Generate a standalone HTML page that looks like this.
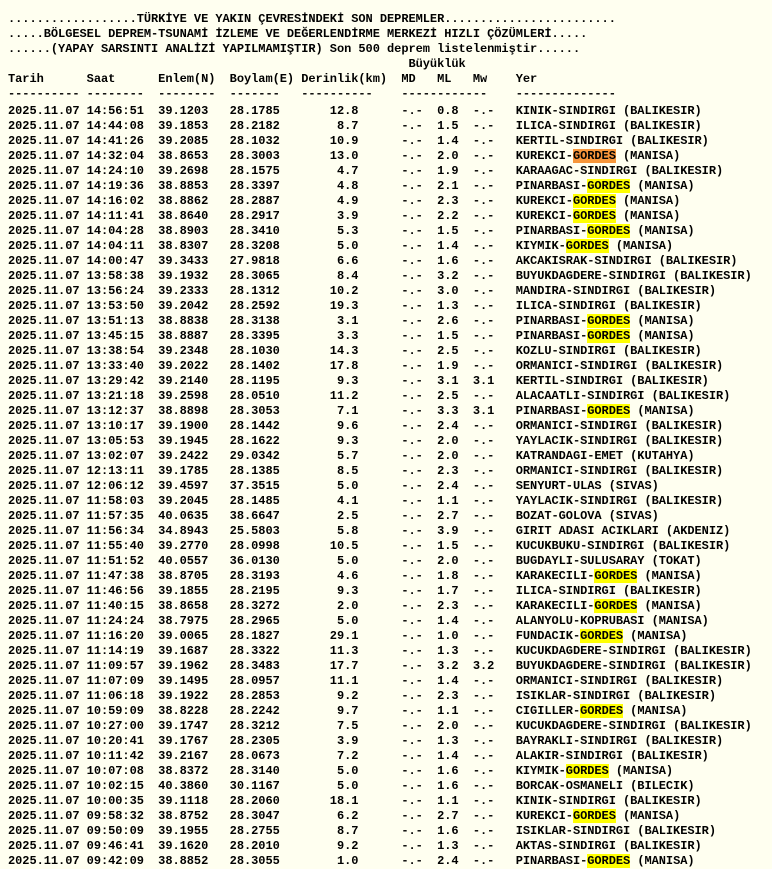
<!DOCTYPE html>
<html><head><meta charset="utf-8"><style>
html,body{margin:0;padding:0;background:#fffff0;width:772px;height:869px;overflow:hidden}
pre{margin:0;position:absolute;left:8px;top:12px;font-family:"Liberation Mono","DejaVu Sans Mono",monospace;font-size:12px;line-height:15px;letter-spacing:-0.05px;font-weight:bold;color:#000}
.y{background:#ffff00}.o{background:#f7963a}
.d{display:inline-block;height:17px;vertical-align:top}
</style></head><body><pre>..................TÜRKİYE VE YAKIN ÇEVRESİNDEKİ SON DEPREMLER........................
.....BÖLGESEL DEPREM-TSUNAMİ İZLEME VE DEĞERLENDİRME MERKEZİ HIZLI ÇÖZÜMLERİ.....
......(YAPAY SARSINTI ANALİZİ YAPILMAMIŞTIR) Son 500 deprem listelenmiştir......
                                                        Büyüklük
Tarih      Saat      Enlem(N)  Boylam(E) Derinlik(km)  MD   ML   Mw    Yer
<span class="d">---------- --------  --------  -------   ----------    ------------    --------------</span>
2025.11.07 14:56:51  39.1203   28.1785       12.8      -.-  0.8  -.-   KINIK-SINDIRGI (BALIKESIR)
2025.11.07 14:44:08  39.1853   28.2182        8.7      -.-  1.5  -.-   ILICA-SINDIRGI (BALIKESIR)
2025.11.07 14:41:26  39.2085   28.1032       10.9      -.-  1.4  -.-   KERTIL-SINDIRGI (BALIKESIR)
2025.11.07 14:32:04  38.8653   28.3003       13.0      -.-  2.0  -.-   KUREKCI-<span class="o">GORDES</span> (MANISA)
2025.11.07 14:24:10  39.2698   28.1575        4.7      -.-  1.9  -.-   KARAAGAC-SINDIRGI (BALIKESIR)
2025.11.07 14:19:36  38.8853   28.3397        4.8      -.-  2.1  -.-   PINARBASI-<span class="y">GORDES</span> (MANISA)
2025.11.07 14:16:02  38.8862   28.2887        4.9      -.-  2.3  -.-   KUREKCI-<span class="y">GORDES</span> (MANISA)
2025.11.07 14:11:41  38.8640   28.2917        3.9      -.-  2.2  -.-   KUREKCI-<span class="y">GORDES</span> (MANISA)
2025.11.07 14:04:28  38.8903   28.3410        5.3      -.-  1.5  -.-   PINARBASI-<span class="y">GORDES</span> (MANISA)
2025.11.07 14:04:11  38.8307   28.3208        5.0      -.-  1.4  -.-   KIYMIK-<span class="y">GORDES</span> (MANISA)
2025.11.07 14:00:47  39.3433   27.9818        6.6      -.-  1.6  -.-   AKCAKISRAK-SINDIRGI (BALIKESIR)
2025.11.07 13:58:38  39.1932   28.3065        8.4      -.-  3.2  -.-   BUYUKDAGDERE-SINDIRGI (BALIKESIR)
2025.11.07 13:56:24  39.2333   28.1312       10.2      -.-  3.0  -.-   MANDIRA-SINDIRGI (BALIKESIR)
2025.11.07 13:53:50  39.2042   28.2592       19.3      -.-  1.3  -.-   ILICA-SINDIRGI (BALIKESIR)
2025.11.07 13:51:13  38.8838   28.3138        3.1      -.-  2.6  -.-   PINARBASI-<span class="y">GORDES</span> (MANISA)
2025.11.07 13:45:15  38.8887   28.3395        3.3      -.-  1.5  -.-   PINARBASI-<span class="y">GORDES</span> (MANISA)
2025.11.07 13:38:54  39.2348   28.1030       14.3      -.-  2.5  -.-   KOZLU-SINDIRGI (BALIKESIR)
2025.11.07 13:33:40  39.2022   28.1402       17.8      -.-  1.9  -.-   ORMANICI-SINDIRGI (BALIKESIR)
2025.11.07 13:29:42  39.2140   28.1195        9.3      -.-  3.1  3.1   KERTIL-SINDIRGI (BALIKESIR)
2025.11.07 13:21:18  39.2598   28.0510       11.2      -.-  2.5  -.-   ALACAATLI-SINDIRGI (BALIKESIR)
2025.11.07 13:12:37  38.8898   28.3053        7.1      -.-  3.3  3.1   PINARBASI-<span class="y">GORDES</span> (MANISA)
2025.11.07 13:10:17  39.1900   28.1442        9.6      -.-  2.4  -.-   ORMANICI-SINDIRGI (BALIKESIR)
2025.11.07 13:05:53  39.1945   28.1622        9.3      -.-  2.0  -.-   YAYLACIK-SINDIRGI (BALIKESIR)
2025.11.07 13:02:07  39.2422   29.0342        5.7      -.-  2.0  -.-   KATRANDAGI-EMET (KUTAHYA)
2025.11.07 12:13:11  39.1785   28.1385        8.5      -.-  2.3  -.-   ORMANICI-SINDIRGI (BALIKESIR)
2025.11.07 12:06:12  39.4597   37.3515        5.0      -.-  2.4  -.-   SENYURT-ULAS (SIVAS)
2025.11.07 11:58:03  39.2045   28.1485        4.1      -.-  1.1  -.-   YAYLACIK-SINDIRGI (BALIKESIR)
2025.11.07 11:57:35  40.0635   38.6647        2.5      -.-  2.7  -.-   BOZAT-GOLOVA (SIVAS)
2025.11.07 11:56:34  34.8943   25.5803        5.8      -.-  3.9  -.-   GIRIT ADASI ACIKLARI (AKDENIZ)
2025.11.07 11:55:40  39.2770   28.0998       10.5      -.-  1.5  -.-   KUCUKBUKU-SINDIRGI (BALIKESIR)
2025.11.07 11:51:52  40.0557   36.0130        5.0      -.-  2.0  -.-   BUGDAYLI-SULUSARAY (TOKAT)
2025.11.07 11:47:38  38.8705   28.3193        4.6      -.-  1.8  -.-   KARAKECILI-<span class="y">GORDES</span> (MANISA)
2025.11.07 11:46:56  39.1855   28.2195        9.3      -.-  1.7  -.-   ILICA-SINDIRGI (BALIKESIR)
2025.11.07 11:40:15  38.8658   28.3272        2.0      -.-  2.3  -.-   KARAKECILI-<span class="y">GORDES</span> (MANISA)
2025.11.07 11:24:24  38.7975   28.2965        5.0      -.-  1.4  -.-   ALANYOLU-KOPRUBASI (MANISA)
2025.11.07 11:16:20  39.0065   28.1827       29.1      -.-  1.0  -.-   FUNDACIK-<span class="y">GORDES</span> (MANISA)
2025.11.07 11:14:19  39.1687   28.3322       11.3      -.-  1.3  -.-   KUCUKDAGDERE-SINDIRGI (BALIKESIR)
2025.11.07 11:09:57  39.1962   28.3483       17.7      -.-  3.2  3.2   BUYUKDAGDERE-SINDIRGI (BALIKESIR)
2025.11.07 11:07:09  39.1495   28.0957       11.1      -.-  1.4  -.-   ORMANICI-SINDIRGI (BALIKESIR)
2025.11.07 11:06:18  39.1922   28.2853        9.2      -.-  2.3  -.-   ISIKLAR-SINDIRGI (BALIKESIR)
2025.11.07 10:59:09  38.8228   28.2242        9.7      -.-  1.1  -.-   CIGILLER-<span class="y">GORDES</span> (MANISA)
2025.11.07 10:27:00  39.1747   28.3212        7.5      -.-  2.0  -.-   KUCUKDAGDERE-SINDIRGI (BALIKESIR)
2025.11.07 10:20:41  39.1767   28.2305        3.9      -.-  1.3  -.-   BAYRAKLI-SINDIRGI (BALIKESIR)
2025.11.07 10:11:42  39.2167   28.0673        7.2      -.-  1.4  -.-   ALAKIR-SINDIRGI (BALIKESIR)
2025.11.07 10:07:08  38.8372   28.3140        5.0      -.-  1.6  -.-   KIYMIK-<span class="y">GORDES</span> (MANISA)
2025.11.07 10:02:15  40.3860   30.1167        5.0      -.-  1.6  -.-   BORCAK-OSMANELI (BILECIK)
2025.11.07 10:00:35  39.1118   28.2060       18.1      -.-  1.1  -.-   KINIK-SINDIRGI (BALIKESIR)
2025.11.07 09:58:32  38.8752   28.3047        6.2      -.-  2.7  -.-   KUREKCI-<span class="y">GORDES</span> (MANISA)
2025.11.07 09:50:09  39.1955   28.2755        8.7      -.-  1.6  -.-   ISIKLAR-SINDIRGI (BALIKESIR)
2025.11.07 09:46:41  39.1620   28.2010        9.2      -.-  1.3  -.-   AKTAS-SINDIRGI (BALIKESIR)
2025.11.07 09:42:09  38.8852   28.3055        1.0      -.-  2.4  -.-   PINARBASI-<span class="y">GORDES</span> (MANISA)</pre></body></html>
